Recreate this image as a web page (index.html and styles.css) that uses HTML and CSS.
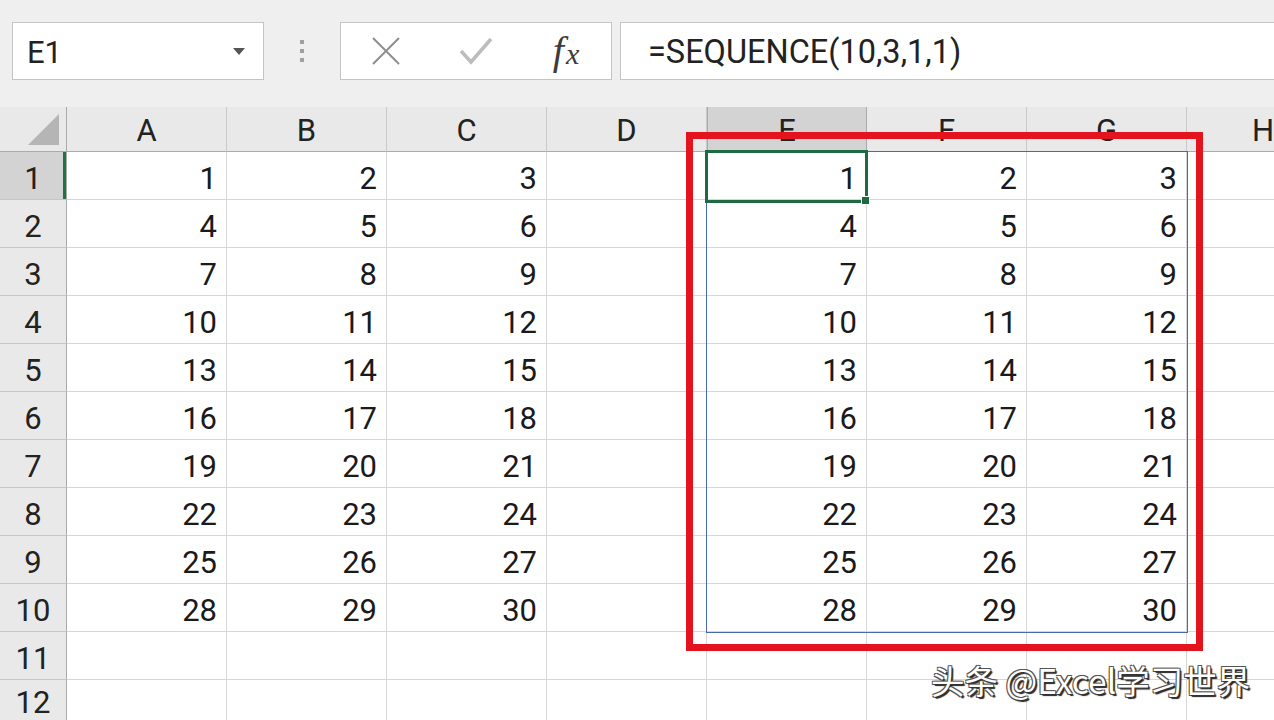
FILE: index.html
```html
<!DOCTYPE html>
<html lang="zh">
<head>
<meta charset="utf-8">
<title>SEQUENCE</title>
<link rel="stylesheet" href="styles.css">
</head>
<body>
<div class="app">
  <div class="toolbar">
    <div class="namebox"><span>E1</span><svg class="dd" width="12" height="8" viewBox="0 0 12 8"><path d="M0 0 L12 0 L6 7 Z" fill="#555"/></svg></div>
    <div class="grip"><i></i><i></i><i></i></div>
    <div class="fnbtns">
      <span class="btn"><svg width="32" height="32" viewBox="0 0 32 32"><path d="M3 3 L29 29 M29 3 L3 29" stroke="#8e8e8e" stroke-width="2" fill="none"/></svg></span>
      <span class="btn"><svg width="34" height="30" viewBox="0 0 34 30"><path d="M2 15 L12 26 L32 3" stroke="#bcbcbc" stroke-width="3.5" fill="none"/></svg></span>
      <span class="btn fx"><i>f</i><i class="x">x</i></span>
    </div>
    <div class="formula">=SEQUENCE(10,3,1,1)</div>
  </div>
  <div class="sheet">
    <div class="hd corner"><svg width="32" height="32" viewBox="0 0 32 32"><path d="M0 31 L31 31 L31 0 Z" fill="#b5b5b5"/></svg></div>
    <div class="hd col">A</div><div class="hd col">B</div><div class="hd col">C</div><div class="hd col">D</div><div class="hd col sel">E</div><div class="hd col">F</div><div class="hd col">G</div><div class="hd col last">H</div>

    <div class="rh sel">1</div><div class="c">1</div><div class="c">2</div><div class="c">3</div><div class="c"></div><div class="c">1</div><div class="c">2</div><div class="c">3</div><div class="c last"></div>
    <div class="rh">2</div><div class="c">4</div><div class="c">5</div><div class="c">6</div><div class="c"></div><div class="c">4</div><div class="c">5</div><div class="c">6</div><div class="c last"></div>
    <div class="rh">3</div><div class="c">7</div><div class="c">8</div><div class="c">9</div><div class="c"></div><div class="c">7</div><div class="c">8</div><div class="c">9</div><div class="c last"></div>
    <div class="rh">4</div><div class="c">10</div><div class="c">11</div><div class="c">12</div><div class="c"></div><div class="c">10</div><div class="c">11</div><div class="c">12</div><div class="c last"></div>
    <div class="rh">5</div><div class="c">13</div><div class="c">14</div><div class="c">15</div><div class="c"></div><div class="c">13</div><div class="c">14</div><div class="c">15</div><div class="c last"></div>
    <div class="rh">6</div><div class="c">16</div><div class="c">17</div><div class="c">18</div><div class="c"></div><div class="c">16</div><div class="c">17</div><div class="c">18</div><div class="c last"></div>
    <div class="rh">7</div><div class="c">19</div><div class="c">20</div><div class="c">21</div><div class="c"></div><div class="c">19</div><div class="c">20</div><div class="c">21</div><div class="c last"></div>
    <div class="rh">8</div><div class="c">22</div><div class="c">23</div><div class="c">24</div><div class="c"></div><div class="c">22</div><div class="c">23</div><div class="c">24</div><div class="c last"></div>
    <div class="rh">9</div><div class="c">25</div><div class="c">26</div><div class="c">27</div><div class="c"></div><div class="c">25</div><div class="c">26</div><div class="c">27</div><div class="c last"></div>
    <div class="rh">10</div><div class="c">28</div><div class="c">29</div><div class="c">30</div><div class="c"></div><div class="c">28</div><div class="c">29</div><div class="c">30</div><div class="c last"></div>
    <div class="rh">11</div><div class="c"></div><div class="c"></div><div class="c"></div><div class="c"></div><div class="c"></div><div class="c"></div><div class="c"></div><div class="c last"></div>
    <div class="rh end">12</div><div class="c end"></div><div class="c end"></div><div class="c end"></div><div class="c end"></div><div class="c end"></div><div class="c end"></div><div class="c end"></div><div class="c last end"></div>
  </div>

  <div class="spill"></div>
  <div class="active"></div>
  <div class="handle"></div>
  <div class="redbox"></div>
  <div class="watermark">头条 @Excel学习世界</div>
</div>
</body>
</html>
```

FILE: styles.css
```css
html, body {
  margin: 0;
  padding: 0;
}
body {
  width: 1274px;
  height: 720px;
  overflow: hidden;
  background: #fff;
  font-family: Roboto, "Liberation Sans", sans-serif;
  color: #1e1e1e;
}
.app {
  position: relative;
  width: 1274px;
  height: 720px;
  overflow: hidden;
}

/* ---------- toolbar ---------- */
.toolbar {
  height: 107px;
  box-sizing: border-box;
  padding: 22px 0 0 12px;
  display: flex;
  align-items: flex-start;
  background: #efefef;
}
.namebox {
  width: 252px;
  height: 58px;
  box-sizing: border-box;
  border: 1px solid #c4c4c4;
  background: #fff;
  display: flex;
  align-items: center;
  justify-content: space-between;
  padding: 2px 18px 0 14px;
  font-size: 31px;
  color: #222;
}
.grip {
  width: 76px;
  height: 58px;
  display: flex;
  flex-direction: column;
  align-items: center;
  justify-content: center;
  gap: 5px;
}
.grip i {
  display: block;
  width: 4px;
  height: 4px;
  background: #a0a0a0;
}
.fnbtns {
  width: 272px;
  height: 58px;
  box-sizing: border-box;
  border: 1px solid #c4c4c4;
  background: #fff;
  display: grid;
  grid-template-columns: 90px 90px 90px;
  align-items: center;
  justify-items: center;
}
.btn {
  display: flex;
  align-items: center;
  justify-content: center;
}
.fx {
  font-family: "Liberation Serif", "DejaVu Serif", serif;
  color: #3c3c3c;
  font-size: 40px;
  line-height: 1;
}
.fx i.x {
  font-size: 30px;
  margin-left: 2px;
  padding-top: 6px;
}
.formula {
  flex: 1;
  margin-left: 8px;
  height: 58px;
  box-sizing: border-box;
  border: 1px solid #c4c4c4;
  border-right: none;
  background: #fff;
  display: flex;
  align-items: center;
  padding: 2px 0 0 27px;
  font-size: 32.5px;
  color: #222;
}

/* ---------- sheet ---------- */
.sheet {
  display: grid;
  grid-template-columns: 67px repeat(7, 160px) 87px;
  grid-template-rows: 45px repeat(11, 48px) 40px;
}
.hd {
  background: #e9e9e9;
  border-bottom: 1px solid #ababab;
  border-right: 1px solid #c9c9c9;
  box-sizing: border-box;
  display: flex;
  align-items: center;
  justify-content: center;
  padding-top: 2px;
  font-size: 31px;
  color: #222;
}
.hd.corner {
  justify-content: flex-end;
  align-items: flex-end;
  padding: 0 6px 5px 0;
  border-right-color: #ababab;
}
.hd.col.sel {
  background: #d3d3d3;
  border-right-color: #aaaaaa;
  border-left: 1px solid #aaaaaa;
}
.hd.last {
  border-right: none;
  justify-content: flex-start;
  padding-left: 65px;
}
.rh {
  background: #e9e9e9;
  border-right: 1px solid #ababab;
  border-bottom: 1px solid #c6c6c6;
  box-sizing: border-box;
  display: flex;
  align-items: center;
  justify-content: center;
  padding-top: 5px;
  font-size: 31px;
  line-height: 31px;
  color: #222;
}
.rh.sel {
  background: #d3d3d3;
  box-shadow: inset -3px 0 0 #217346;
}
.c {
  border-right: 1px solid #d6d6d6;
  border-bottom: 1px solid #d6d6d6;
  box-sizing: border-box;
  display: flex;
  align-items: center;
  justify-content: flex-end;
  padding: 6px 9px 0 0;
  font-size: 31px;
  line-height: 31px;
  color: #1a1a1a;
}
.c.last {
  border-right: none;
}
.rh.end {
  border-bottom: none;
  align-items: flex-start;
  padding-top: 10px;
  line-height: 26px;
}
.c.end {
  border-bottom: none;
}

/* ---------- overlays ---------- */
.spill {
  position: absolute;
  left: 706px;
  top: 151px;
  width: 482px;
  height: 482px;
  box-sizing: border-box;
  border: 1.5px solid #4a68ad;
}
.active {
  position: absolute;
  left: 705px;
  top: 150px;
  width: 163px;
  height: 53px;
  box-sizing: border-box;
  border: 3px solid #1f6b41;
}
.handle {
  position: absolute;
  left: 861px;
  top: 196px;
  width: 9px;
  height: 9px;
  box-sizing: border-box;
  background: #1f6b41;
  border: 1px solid #fff;
}
.redbox {
  position: absolute;
  left: 686px;
  top: 132px;
  width: 517px;
  height: 519px;
  box-sizing: border-box;
  border: 7px solid #e3141d;
}
.watermark {
  position: absolute;
  left: 931px;
  top: 658px;
  font-family: "Noto Sans CJK SC", "Noto Sans", sans-serif;
  font-size: 33.5px;
  line-height: 44px;
  color: #fff;
  white-space: nowrap;
  text-shadow: 1px 1px 0 #333, -1px -1px 0 #555, 1px -1px 0 #555, -1px 1px 0 #555, 2px 2px 1px #222;
}
```
